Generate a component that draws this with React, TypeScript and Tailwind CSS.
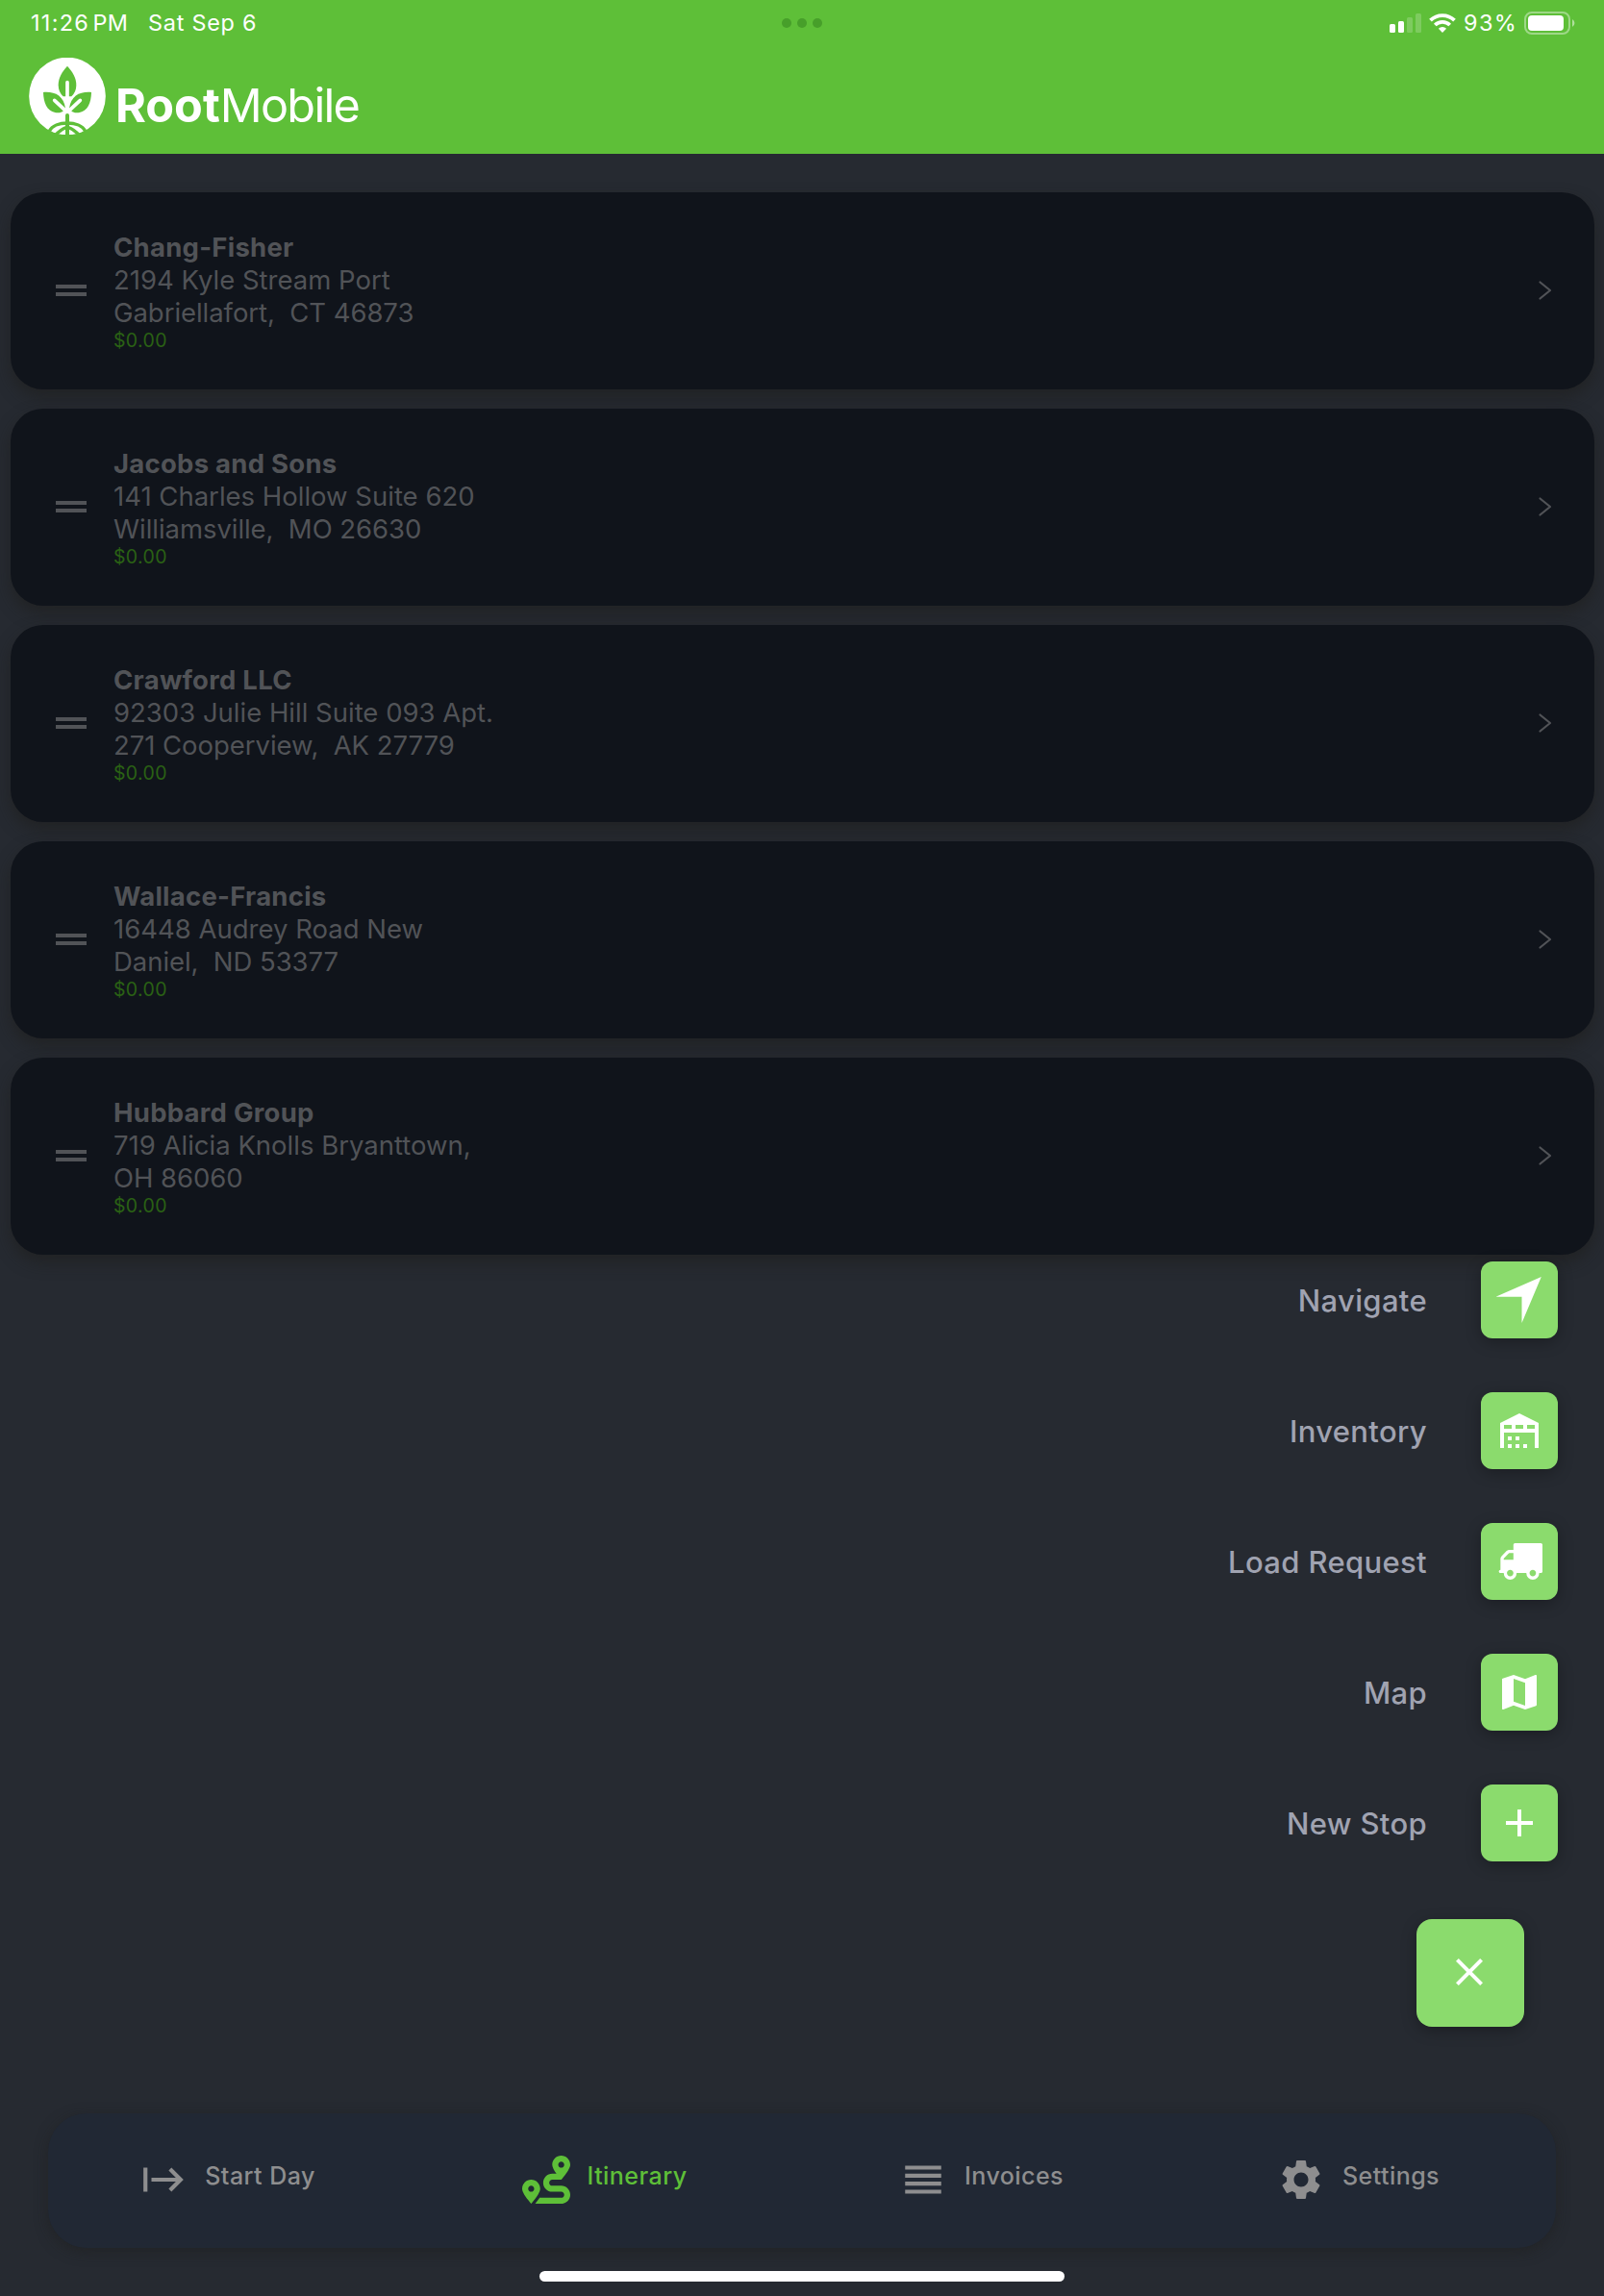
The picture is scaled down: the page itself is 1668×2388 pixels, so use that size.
import type { ReactNode } from 'react'
import { FaRoute } from 'react-icons/fa'
import { MdAdd, MdClose, MdDragHandle, MdMap, MdReorder, MdSettings, MdStart } from 'react-icons/md'

const stops = [
  { name: 'Chang-Fisher', line1: '2194 Kyle Stream Port', line2: 'Gabriellafort, \u00a0CT 46873', total: '$0.00' },
  { name: 'Jacobs and Sons', line1: '141 Charles Hollow Suite 620', line2: 'Williamsville, \u00a0MO 26630', total: '$0.00' },
  { name: 'Crawford LLC', line1: '92303 Julie Hill Suite 093 Apt.', line2: '271 Cooperview, \u00a0AK 27779', total: '$0.00' },
  { name: 'Wallace-Francis', line1: '16448 Audrey Road New', line2: 'Daniel, \u00a0ND 53377', total: '$0.00' },
  { name: 'Hubbard Group', line1: '719 Alicia Knolls Bryanttown,', line2: 'OH 86060', total: '$0.00' },
]

const actions: { label: string; icon: ReactNode }[] = [
  { label: 'Navigate', icon: <NavigateIcon /> },
  { label: 'Inventory', icon: <WarehouseIcon /> },
  { label: 'Load Request', icon: <TruckIcon /> },
  { label: 'Map', icon: <MdMap size={48} /> },
  { label: 'New Stop', icon: <MdAdd size={48} /> },
]

const tabs = [
  { label: 'Start Day', icon: MdStart },
  { label: 'Itinerary', icon: FaRoute, active: true },
  { label: 'Invoices', icon: MdReorder },
  { label: 'Settings', icon: MdSettings },
]

function NavigateIcon() {
  return (
    <svg width="48" height="48" viewBox="0 0 48 48" fill="currentColor">
      <path d="M46.8 0 26.5 48V20.8H-.5Z" />
    </svg>
  )
}

function WarehouseIcon() {
  return (
    <svg width="48" height="48" viewBox="0 0 24 24" fill="currentColor">
      <path d="M6 19h2v2H6v-2M12 3 2 8v13h2v-8h16v8h2V8L12 3M8 11H4V9h4v2m6 0h-4V9h4v2m6 0h-4V9h4v2M6 15h2v2H6v-2m4 0h2v2h-2v-2m0 4h2v2h-2v-2m4 0h2v2h-2v-2Z" />
    </svg>
  )
}

function TruckIcon() {
  return (
    <svg width="47" height="38" viewBox="0 256 1792 1408" preserveAspectRatio="none" fill="currentColor">
      <path d="M640 1408q0-52-38-90t-90-38-90 38-38 90 38 90 90 38 90-38 38-90zm-384-512h384v-256h-158q-13 0-22 9l-195 195q-9 9-9 22v30zm1280 512q0-52-38-90t-90-38-90 38-38 90 38 90 90 38 90-38 38-90zm256-1088v1024q0 15-4 26.5t-13.5 18.5-16.5 11.5-23.5 6-22.5 2-25.5 0-22.5-.5q0 106-75 181t-181 75-181-75-75-181h-384q0 106-75 181t-181 75-181-75-75-181h-64q-3 0-22.5.5t-25.5 0-22.5-2-23.5-6-16.5-11.5-13.5-18.5-4-26.5q0-26 19-45t45-19v-320q0-8-.5-35t0-38 2.5-34.5 6.5-37 14-30.5 22.5-30l198-198q19-19 50.5-32t58.5-13h160v-192q0-26 19-45t45-19h1024q26 0 45 19t19 45z" />
    </svg>
  )
}

function Logo() {
  return (
    <svg width="80" height="80" viewBox="0 0 240 240" fill="none" className="shrink-0">
      <ellipse cx="120" cy="120" rx="119.5" ry="121" fill="#fff" />
      <g fill="#5ebf38">
        <path d="M120 26C136 44 148 62 148 86C148 100 142 112 133 121H107C98 112 92 100 92 86C92 62 104 44 120 26Z" />
        <path d="M45 108C80 105 108 118 114 158C106 172 92 173 82 171C56 165 46 142 45 108Z" />
        <path d="M195 108C160 105 132 118 126 158C134 172 148 173 158 171C184 165 194 142 195 108Z" />
      </g>
      <g stroke="#fff" strokeWidth="11" strokeLinecap="round">
        <path d="M120 77V168" />
        <path d="M80 133 116 167M160 133 124 167" />
      </g>
      <g stroke="#5ebf38" strokeWidth="10">
        <path d="M120 180V240" strokeWidth="12" strokeLinecap="round" />
        <path d="M64 229C72 212 96 204 120 204S168 212 176 229" />
        <path d="M120 216C104 222 92 230 82 243M120 216C136 222 148 230 158 243" />
      </g>
    </svg>
  )
}

function StatusBar() {
  return (
    <div className="h-[47px] pl-8 pr-[30px] flex items-center text-[23.4px]">
      <span className="tracking-[1.3px]">11:26</span>
      <span className="ml-[3.5px] tracking-[0.2px]">PM</span>
      <span className="ml-[21px] tracking-[0.75px]">Sat Sep 6</span>
      <div className="flex-1 flex items-center justify-end">
        <svg width="34" height="20" viewBox="0 0 34 20" fill="#fff" className="mt-px">
          <rect x="0" y="11" width="6" height="9" rx="1.5" />
          <rect x="9" y="8" width="6" height="12" rx="1.5" />
          <rect x="18" y="4" width="6" height="16" rx="1.5" opacity=".2" />
          <rect x="27" y="0" width="6" height="20" rx="1.5" opacity=".2" />
        </svg>
        <svg width="28" height="20" viewBox="0 0 28 20" className="ml-[7px] mt-px" fill="none" stroke="#fff" strokeWidth="3.8">
          <path d="M1.5 7.2a17.8 17.8 0 0 1 25 0" />
          <path d="M6.3 12a11 11 0 0 1 15.4 0" />
          <path d="M14 20 9.9 15.8a5.8 5.8 0 0 1 8.2 0Z" fill="#fff" stroke="none" />
        </svg>
        <span className="ml-2 w-[56px] tracking-[1.4px]">93%</span>
        <svg width="53" height="24" viewBox="0 0 53 24" className="ml-[7px] mt-px">
          <rect x="1" y="1" width="46" height="22" rx="7" fill="none" stroke="#fff" strokeOpacity=".4" strokeWidth="2" />
          <rect x="4" y="4" width="37" height="16" rx="4" fill="#fff" />
          <path d="M50 8a4.5 4.5 0 0 1 0 8Z" fill="#fff" opacity=".5" />
        </svg>
      </div>
    </div>
  )
}

function StopCard({ name, line1, line2, total }: (typeof stops)[number]) {
  return (
    <div className="h-[205px] rounded-[34px] bg-[#10141b] shadow-[0_8px_16px_rgba(30,30,28,0.6)] pl-[39px] pr-[37px] flex items-center text-[#515357]">
      <MdDragHandle size={48} className="mb-px" />
      <div className="flex-1 ml-[20.5px] text-[27.5px] leading-[34px]">
        <p className="font-bold tracking-[0.25px]">{name}</p>
        <p>{line1}</p>
        <p className="tracking-[-0.05px]">{line2}</p>
        <p className="text-[19.5px] leading-6 tracking-[0.35px] text-[#2a6114]">{total}</p>
      </div>
      <svg width="30" height="30" viewBox="0 0 30 30" fill="none" stroke="currentColor" strokeWidth="2.2" strokeLinecap="round" strokeLinejoin="round" className="mb-px">
        <path d="M10.5 6.5 21 15 10.5 23.5" />
      </svg>
    </div>
  )
}

export default function App() {
  return (
    <div className="w-[1668px] h-[2388px] overflow-hidden bg-[#262a31] flex flex-col font-['Inter',sans-serif]">
      <header className="relative h-40 shrink-0 bg-[#5ebf38] text-white">
        <StatusBar />
        <div className="absolute top-[19px] left-[813px] flex gap-[6px]">
          <i className="size-[10px] rounded-full bg-[#479f2a]" />
          <i className="size-[10px] rounded-full bg-[#479f2a]" />
          <i className="size-[10px] rounded-full bg-[#479f2a]" />
        </div>
        <div className="mt-[13px] pl-[30px] flex">
          <Logo />
          <h1 className="ml-[10px] mt-5 text-[48.6px] leading-[60px]">
            <span className="font-bold">Root</span>
            <span className="tracking-[-1.7px]">Mobile</span>
          </h1>
        </div>
      </header>

      <main className="pt-10 px-[10.5px] flex flex-col gap-5">
        {stops.map(stop => <StopCard key={stop.name} {...stop} />)}
      </main>

      <div className="mt-[7px] pr-12 flex flex-col items-end gap-14">
        {actions.map(({ label, icon }) => (
          <div key={label} className="h-20 flex items-center gap-14">
            <span className="pt-0.5 text-[31px] font-medium tracking-[0.35px] text-[#a0a3b1]">{label}</span>
            <button className="size-20 rounded-xl bg-[#8bdb6d] text-white flex items-center justify-center shadow-[0_4px_16px_rgba(0,0,0,0.28)]">
              {icon}
            </button>
          </div>
        ))}
      </div>
      <button className="mt-[60px] mr-[83px] self-end size-28 rounded-2xl bg-[#8bdb6d] text-white flex items-center justify-center pr-0.5 pb-0.5 shadow-[0_4px_16px_rgba(0,0,0,0.28)]">
        <MdClose size={48} />
      </button>

      <nav className="mt-[90px] mx-[50px] h-[140px] rounded-[40px] bg-[#212834] grid grid-cols-4 shadow-[0_4px_14px_rgba(30,30,28,0.5)]">
        {tabs.map(({ label, icon: Icon, active }) => (
          <div key={label} className={`flex items-center justify-center gap-[18px] pr-[19px] pb-0.5 ${active ? 'text-[#5ebf38]' : 'text-[#8e8e8f]'}`}>
            <Icon size={50} />
            <span className="pb-1.5 text-[25px] font-medium tracking-[0.45px]">{label}</span>
          </div>
        ))}
      </nav>
      <div className="mt-6 w-[546px] h-[11px] self-center rounded-full bg-white" />
    </div>
  )
}
